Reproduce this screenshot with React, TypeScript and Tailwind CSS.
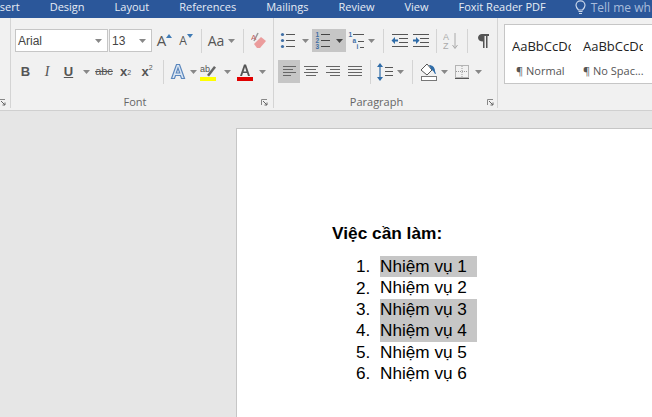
import React from "react";

const Caret = ({ dark = false }: { dark?: boolean }) => (
  <svg width="7" height="4" viewBox="0 0 7 4"><path d="M0 0h7L3.5 4z" fill={dark ? "#444" : "#888"} /></svg>
);

const Cell = ({ className = "", children }: { className?: string; children?: React.ReactNode }) => (
  <div className={`flex h-full shrink-0 items-center justify-center ${className}`}>{children}</div>
);

const Sep = ({ className = "" }: { className?: string }) => (
  <Cell className={className}><div className="h-[24px] w-px bg-[#d4d4d4]" /></Cell>
);

const Lines = ({ rows, w = 16 }: { rows: [number, number][]; w?: number }) => (
  <svg width={w} height="16" viewBox={`0 0 ${w} 16`}>
    {rows.map(([x, len], i) => (
      <rect key={i} x={x} y={2 + i * 3} width={len} height="1" fill="#666" />
    ))}
  </svg>
);

const Bullets = () => (
  <svg width="16" height="18" viewBox="0 0 16 18">
    {[2, 8, 14].map((y) => (
      <g key={y}>
        <circle cx="2.5" cy={y + 0.5} r="1.6" fill="#3e6ea5" />
        <rect x="6" y={y} width="9" height="1" fill="#555" />
      </g>
    ))}
  </svg>
);

const Numbered = () => (
  <svg width="16" height="18" viewBox="0 0 16 18">
    {[["1", 2], ["2", 8], ["3", 14]].map(([n, y]) => (
      <g key={n as string}>
        <text x="0.5" y={(y as number) + 3} fontSize="6.5" fontWeight="700" fontFamily="'Liberation Sans', sans-serif" fill="#3e6ea5">{n}</text>
        <rect x="6" y={y as number} width="9" height="1" fill="#444" />
      </g>
    ))}
  </svg>
);

const Multi = () => (
  <svg width="17" height="18" viewBox="0 0 17 18">
    <text x="0.5" y="5" fontSize="6.5" fontWeight="700" fontFamily="'Liberation Sans', sans-serif" fill="#3e6ea5">1</text>
    <rect x="5" y="2" width="11" height="1" fill="#555" />
    <text x="4.500" y="11" fontSize="6.5" fontWeight="700" fontFamily="'Liberation Sans', sans-serif" fill="#3e6ea5">a</text>
    <rect x="10" y="9" width="6" height="1" fill="#555" />
    <text x="8.500" y="17" fontSize="6.5" fontWeight="700" fontFamily="'Liberation Sans', sans-serif" fill="#3e6ea5">i</text>
    <rect x="12" y="15" width="4" height="1" fill="#555" />
  </svg>
);

const Indent = ({ flip = false }: { flip?: boolean }) => (
  <svg width="17" height="16" viewBox="0 0 17 16">
    <rect x="1" y="1" width="16" height="1" fill="#555" />
    <rect x="8" y="5" width="9" height="1" fill="#555" />
    <rect x="8" y="9" width="9" height="1" fill="#555" />
    <rect x="1" y="13" width="16" height="1" fill="#555" />
    {flip ? (
      <path d="M1 6.5h3V4l3.5 3.5L4 11V8.500H1z" fill="#2f6ca8" />
    ) : (
      <path d="M7 6.500H4V4L.5 7.500 4 11V8.500h3z" fill="#2f6ca8" />
    )}
  </svg>
);

const Sort = () => (
  <svg width="18" height="20" viewBox="0 0 18 20">
    <text x="0" y="9" fontSize="9" fontFamily="'Liberation Sans', sans-serif" fill="#aaa">A</text>
    <text x="0" y="18" fontSize="9" fontFamily="'Liberation Sans', sans-serif" fill="#aaa">Z</text>
    <path d="M12 2v15M9.500 14l2.500 3.500 2.500-3.500" stroke="#aaa" fill="none" />
  </svg>
);

const Pilcrow = () => (
  <svg width="11" height="14" viewBox="0 0 11 14">
    <path d="M4 0h7v2H9.500v12H8V2H6.500v12H5V7.500C2 7.500 0 6 0 3.700S2 0 4 0z" fill="#555" />
  </svg>
);

const Grow = ({ big = true }: { big?: boolean }) => (
  <span className="flex items-end text-[#555]">
    <span className={big ? "text-[15px] leading-none" : "text-[12px] leading-none"}>A</span>
    <svg width="6" height="4" viewBox="0 0 6 4" className={big ? "mb-[10px]" : "mb-[9px]"}>
      <path d={big ? "M0 4h6L3 0z" : "M0 0h6L3 4z"} fill="#3e7ab5" />
    </svg>
  </span>
);

const Eraser = () => (
  <svg width="16" height="17" viewBox="0 0 16 17">
    <path d="M3 12l7-7 5 4-6 7H6z" fill="#eb9c9c" />
    <path d="M3 9l4-8" stroke="#999" strokeWidth="1.500" />
    <text x="0" y="8" fontSize="8" fontFamily="'Liberation Sans', sans-serif" fill="#c06060">A</text>
  </svg>
);

const TextEffect = () => (
  <svg width="16" height="17" viewBox="0 0 16 17">
    <path d="M1.500 15.500L6.500 1.500h3l5 14h-3l-1-3h-5l-1 3zM6.300 10h3.400L8 5z" fill="#dbe6f3" stroke="#5b87bd" strokeWidth="1.200" />
  </svg>
);

const Highlight = () => (
  <svg width="17" height="18" viewBox="0 0 17 18">
    <text x="0" y="9" fontSize="9" fontFamily="'Liberation Sans', sans-serif" fill="#555">ab</text>
    <path d="M7 12l7-9 2 1.500-7 9z" fill="#666" />
    <rect x="0" y="14" width="16" height="4" fill="#ffff00" />
  </svg>
);

const FontColor = () => (
  <svg width="16" height="18" viewBox="0 0 16 18">
    <path d="M3 13L7 1.500h2L13 13h-2l-1-3H6l-1 3zM6.600 8.500h2.800L8 4z" fill="#555" />
    <rect x="0" y="14" width="16" height="4" fill="#e00000" />
  </svg>
);

const LineSpacing = () => (
  <svg width="17" height="18" viewBox="0 0 17 18">
    <path d="M3 0l3 4H3.600v10H6l-3 4-3-4h2.400V4H0z" fill="#2f6ca8" />
    <rect x="8" y="4" width="8" height="1" fill="#555" />
    <rect x="8" y="8" width="8" height="1" fill="#555" />
    <rect x="8" y="12" width="8" height="1" fill="#555" />
  </svg>
);

const Shading = () => (
  <svg width="18" height="19" viewBox="0 0 18 19">
    <path d="M1 8l6-6 5 6-5 5z" fill="#fff" stroke="#555" />
    <path d="M9 3c3 0 6 2 6 6 0 1 1 2 1 3-1 0-2-1-2-2l-3-3z" fill="#2f6ca8" />
    <rect x="1.500" y="14.500" width="15" height="4" fill="#fff" stroke="#777" />
  </svg>
);

const Borders = () => (
  <svg width="14" height="14" viewBox="0 0 14 14">
    <rect x="0.500" y="0.500" width="13" height="12" fill="none" stroke="#777" strokeDasharray="1 1" />
    <path d="M7 1v12M1 6.500h12" stroke="#999" strokeDasharray="1 1" />
    <rect x="0" y="13" width="14" height="1" fill="#555" />
  </svg>
);

const Launcher = () => (
  <svg width="7" height="7" viewBox="0 0 7 7">
    <path d="M0.500 6V0.500H6" fill="none" stroke="#888" />
    <path d="M2 2l4 4M3.500 6H6V3.500" fill="none" stroke="#666" />
  </svg>
);

const Bulb = () => (
  <svg width="11" height="15" viewBox="0 0 11 15" className="shrink-0">
    <path d="M3.500 10C2 8.500 1 7.500 1 5.300a4.500 4.500 0 019 0C10 7.500 9 8.500 7.500 10z" fill="none" stroke="#c9d6ea" strokeWidth="1.200" />
    <rect x="3.500" y="11" width="4" height="1" fill="#c9d6ea" />
    <rect x="4" y="13" width="3" height="1" fill="#c9d6ea" />
  </svg>
);

const Combo = ({ text, className }: { text: string; className: string }) => (
  <div className={`flex h-[23px] items-center justify-between border border-[#c6c6c6] bg-white pl-[2px] pr-[5px] text-[12px] text-[#444] ${className}`}>
    <span>{text}</span>
    <Caret />
  </div>
);

const tabs = ["Insert", "Design", "Layout", "References", "Mailings", "Review", "View", "Foxit Reader PDF"];
const tasks = [
  ["Nhiệm vụ 1", true],
  ["Nhiệm vụ 2", false],
  ["Nhiệm vụ 3", true],
  ["Nhiệm vụ 4", true],
  ["Nhiệm vụ 5", false],
  ["Nhiệm vụ 6", false],
] as const;

export default function App() {
  return (
    <div className="flex h-[417px] w-[652px] flex-col overflow-hidden bg-[#e6e6e6] font-['Open_Sans',sans-serif]">
      <div className="flex h-[18px] shrink-0 items-start overflow-hidden bg-[#2b579a] text-[11px] leading-[13px] text-[#e6ecf5]">
        <div className="ml-[-10px] flex shrink-0 items-center gap-[30px]">
          {tabs.map((t) => <span key={t}>{t}</span>)}
        </div>
        <div className="ml-[29px] flex shrink-0 items-center gap-[5px] text-[12px] text-[#a9bcdb]">
          <Bulb />
          <span>Tell me wh</span>
        </div>
      </div>

      <div className="flex h-[93px] shrink-0 border-b border-[#d0d0d0] bg-[#f1f1f1]">
        <div className="flex h-[90px] w-[11px] shrink-0 items-end justify-start border-r border-[#d4d4d4] pb-[2px]">
          <div className="ml-[-1px]"><Launcher /></div>
        </div>

        <div className="flex h-[90px] w-[263px] shrink-0 flex-col border-r border-[#d4d4d4] pl-[4px] pt-[11px]">
          <div className="flex h-[23px]">
            <Combo text="Arial" className="w-[93px] font-['Liberation_Sans',sans-serif]" />
            <Combo text="13" className="ml-px w-[43px] font-['Liberation_Sans',sans-serif]" />
            <Cell className="ml-[3px] w-[19px]"><Grow /></Cell>
            <Cell className="ml-[2px] w-[20px]"><Grow big={false} /></Cell>
            <Sep className="w-[10px]" />
            <Cell className="w-[20px] text-[14px] text-[#555]">Aa</Cell>
            <Cell className="w-[11px]"><Caret /></Cell>
            <Sep className="ml-px w-[10px]" />
            <Cell className="ml-px w-[20px]"><Eraser /></Cell>
          </div>
          <div className="mt-[8px] flex h-[23px] font-['Liberation_Sans',sans-serif] text-[#555]">
            <Cell className="w-[21px] text-[13px] font-bold">B</Cell>
            <Cell className="w-[22px] font-['Liberation_Serif',serif] text-[14px] italic">I</Cell>
            <Cell className="w-[21px] text-[13px] font-bold underline">U</Cell>
            <Cell className="w-[14px]"><Caret /></Cell>
            <Cell className="w-[22px] text-[11px] line-through">abc</Cell>
            <Cell className="w-[21px] text-[13px] font-bold">x<sub className="text-[7px] font-normal">2</sub></Cell>
            <Cell className="w-[22px] text-[13px] font-bold">x<sup className="text-[7px] font-normal">2</sup></Cell>
            <Sep className="w-[10px]" />
            <Cell className="w-[20px]"><TextEffect /></Cell>
            <Cell className="w-[10px]"><Caret /></Cell>
            <Cell className="w-[21px]"><Highlight /></Cell>
            <Cell className="w-[17px]"><Caret /></Cell>
            <Cell className="w-[18px]"><FontColor /></Cell>
            <Cell className="w-[16px]"><Caret /></Cell>
          </div>
          <div className="mt-[11px] flex items-center">
            <div className="flex-1 pr-[6px] text-center text-[11px] leading-[16px] text-[#666]">Font</div>
            <div className="mr-[5px] flex"><Launcher /></div>
          </div>
        </div>

        <div className="flex h-[90px] w-[224px] shrink-0 flex-col border-r border-[#d4d4d4] pl-[4px] pt-[11px]">
          <div className="flex h-[23px]">
            <Cell className="w-[20px]"><Bullets /></Cell>
            <Cell className="w-[14px]"><Caret /></Cell>
            <div className="flex h-[23px] w-[34px] shrink-0 items-center gap-[5px] bg-[#c6c6c6] pl-[3px]">
              <Numbered />
              <Caret dark />
            </div>
            <Cell className="w-[20px]"><Multi /></Cell>
            <Cell className="w-[10px]"><Caret /></Cell>
            <Sep className="w-[14px]" />
            <Cell className="w-[18px]"><Indent /></Cell>
            <Cell className="ml-[3px] w-[19px]"><Indent flip /></Cell>
            <Sep className="w-[12px]" />
            <Cell className="w-[20px]"><Sort /></Cell>
            <Sep className="w-[10px]" />
            <Cell className="w-[22px]"><Pilcrow /></Cell>
          </div>
          <div className="mt-[8px] flex h-[23px]">
            <Cell className="w-[22px] bg-[#c6c6c6]"><Lines rows={[[2, 13], [2, 10], [2, 13], [2, 8]]} /></Cell>
            <Cell className="w-[22px]"><Lines rows={[[1, 14], [3, 10], [1, 14], [3, 10]]} /></Cell>
            <Cell className="w-[22px]"><Lines rows={[[1, 14], [5, 10], [1, 14], [5, 10]]} /></Cell>
            <Cell className="w-[22px]"><Lines rows={[[1, 14], [1, 14], [1, 14], [1, 14]]} /></Cell>
            <Sep className="w-[8px]" />
            <Cell className="w-[22px]"><LineSpacing /></Cell>
            <Cell className="w-[8px]"><Caret /></Cell>
            <Sep className="w-[16px]" />
            <Cell className="w-[18px]"><Shading /></Cell>
            <Cell className="w-[12px]"><Caret /></Cell>
            <Cell className="w-[23px]"><Borders /></Cell>
            <Cell className="w-[10px]"><Caret /></Cell>
          </div>
          <div className="mt-[11px] flex items-center">
            <div className="flex-1 pr-[12px] text-center text-[11px] leading-[16px] text-[#666]">Paragraph</div>
            <div className="mr-[3px] flex"><Launcher /></div>
          </div>
        </div>

        <div className="min-w-0 flex-1 pl-[6px] pt-[6px]">
          <div className="flex h-[60px] border border-r-0 border-[#c6c6c6] bg-white">
            <div className="flex w-[74px] shrink-0 flex-col overflow-hidden pl-[7px] pt-[12px]">
              <div className="w-[59px] overflow-hidden whitespace-nowrap text-[13px] leading-[18px] text-[#222]">AaBbCcDdEe</div>
              <div className="mt-[8px] pl-[4px] text-[11px] leading-[15px] text-[#555]">¶ Normal</div>
            </div>
            <div className="flex min-w-0 flex-1 flex-col overflow-hidden pl-[4px] pt-[12px]">
              <div className="w-[60px] overflow-hidden whitespace-nowrap text-[13px] leading-[18px] text-[#222]">AaBbCcDdEe</div>
              <div className="mt-[8px] whitespace-nowrap text-[11px] leading-[15px] text-[#555]">¶ No Spac...</div>
            </div>
          </div>
        </div>
      </div>

      <div className="ml-[236px] mt-[17px] flex-1 border-l border-t border-[#c6c6c6] bg-white pl-[95px] pt-[94px] font-['Liberation_Sans',sans-serif] text-[17.2px] text-black">
        <div className="text-[17.3px] font-bold leading-[21px]">Việc cần làm:</div>
        <div className="ml-[24px] mt-[12px] flex flex-col">
          {tasks.map(([t, on], i) => (
            <div key={t} className="flex h-[21.4px] items-center leading-[21px]">
              <span className="w-[24px] shrink-0">{i + 1}.</span>
              <span className={on ? "h-full w-[97px] bg-[#c6c6c6]" : "h-full w-[97px]"}>{t}</span>
            </div>
          ))}
        </div>
      </div>
    </div>
  );
}
